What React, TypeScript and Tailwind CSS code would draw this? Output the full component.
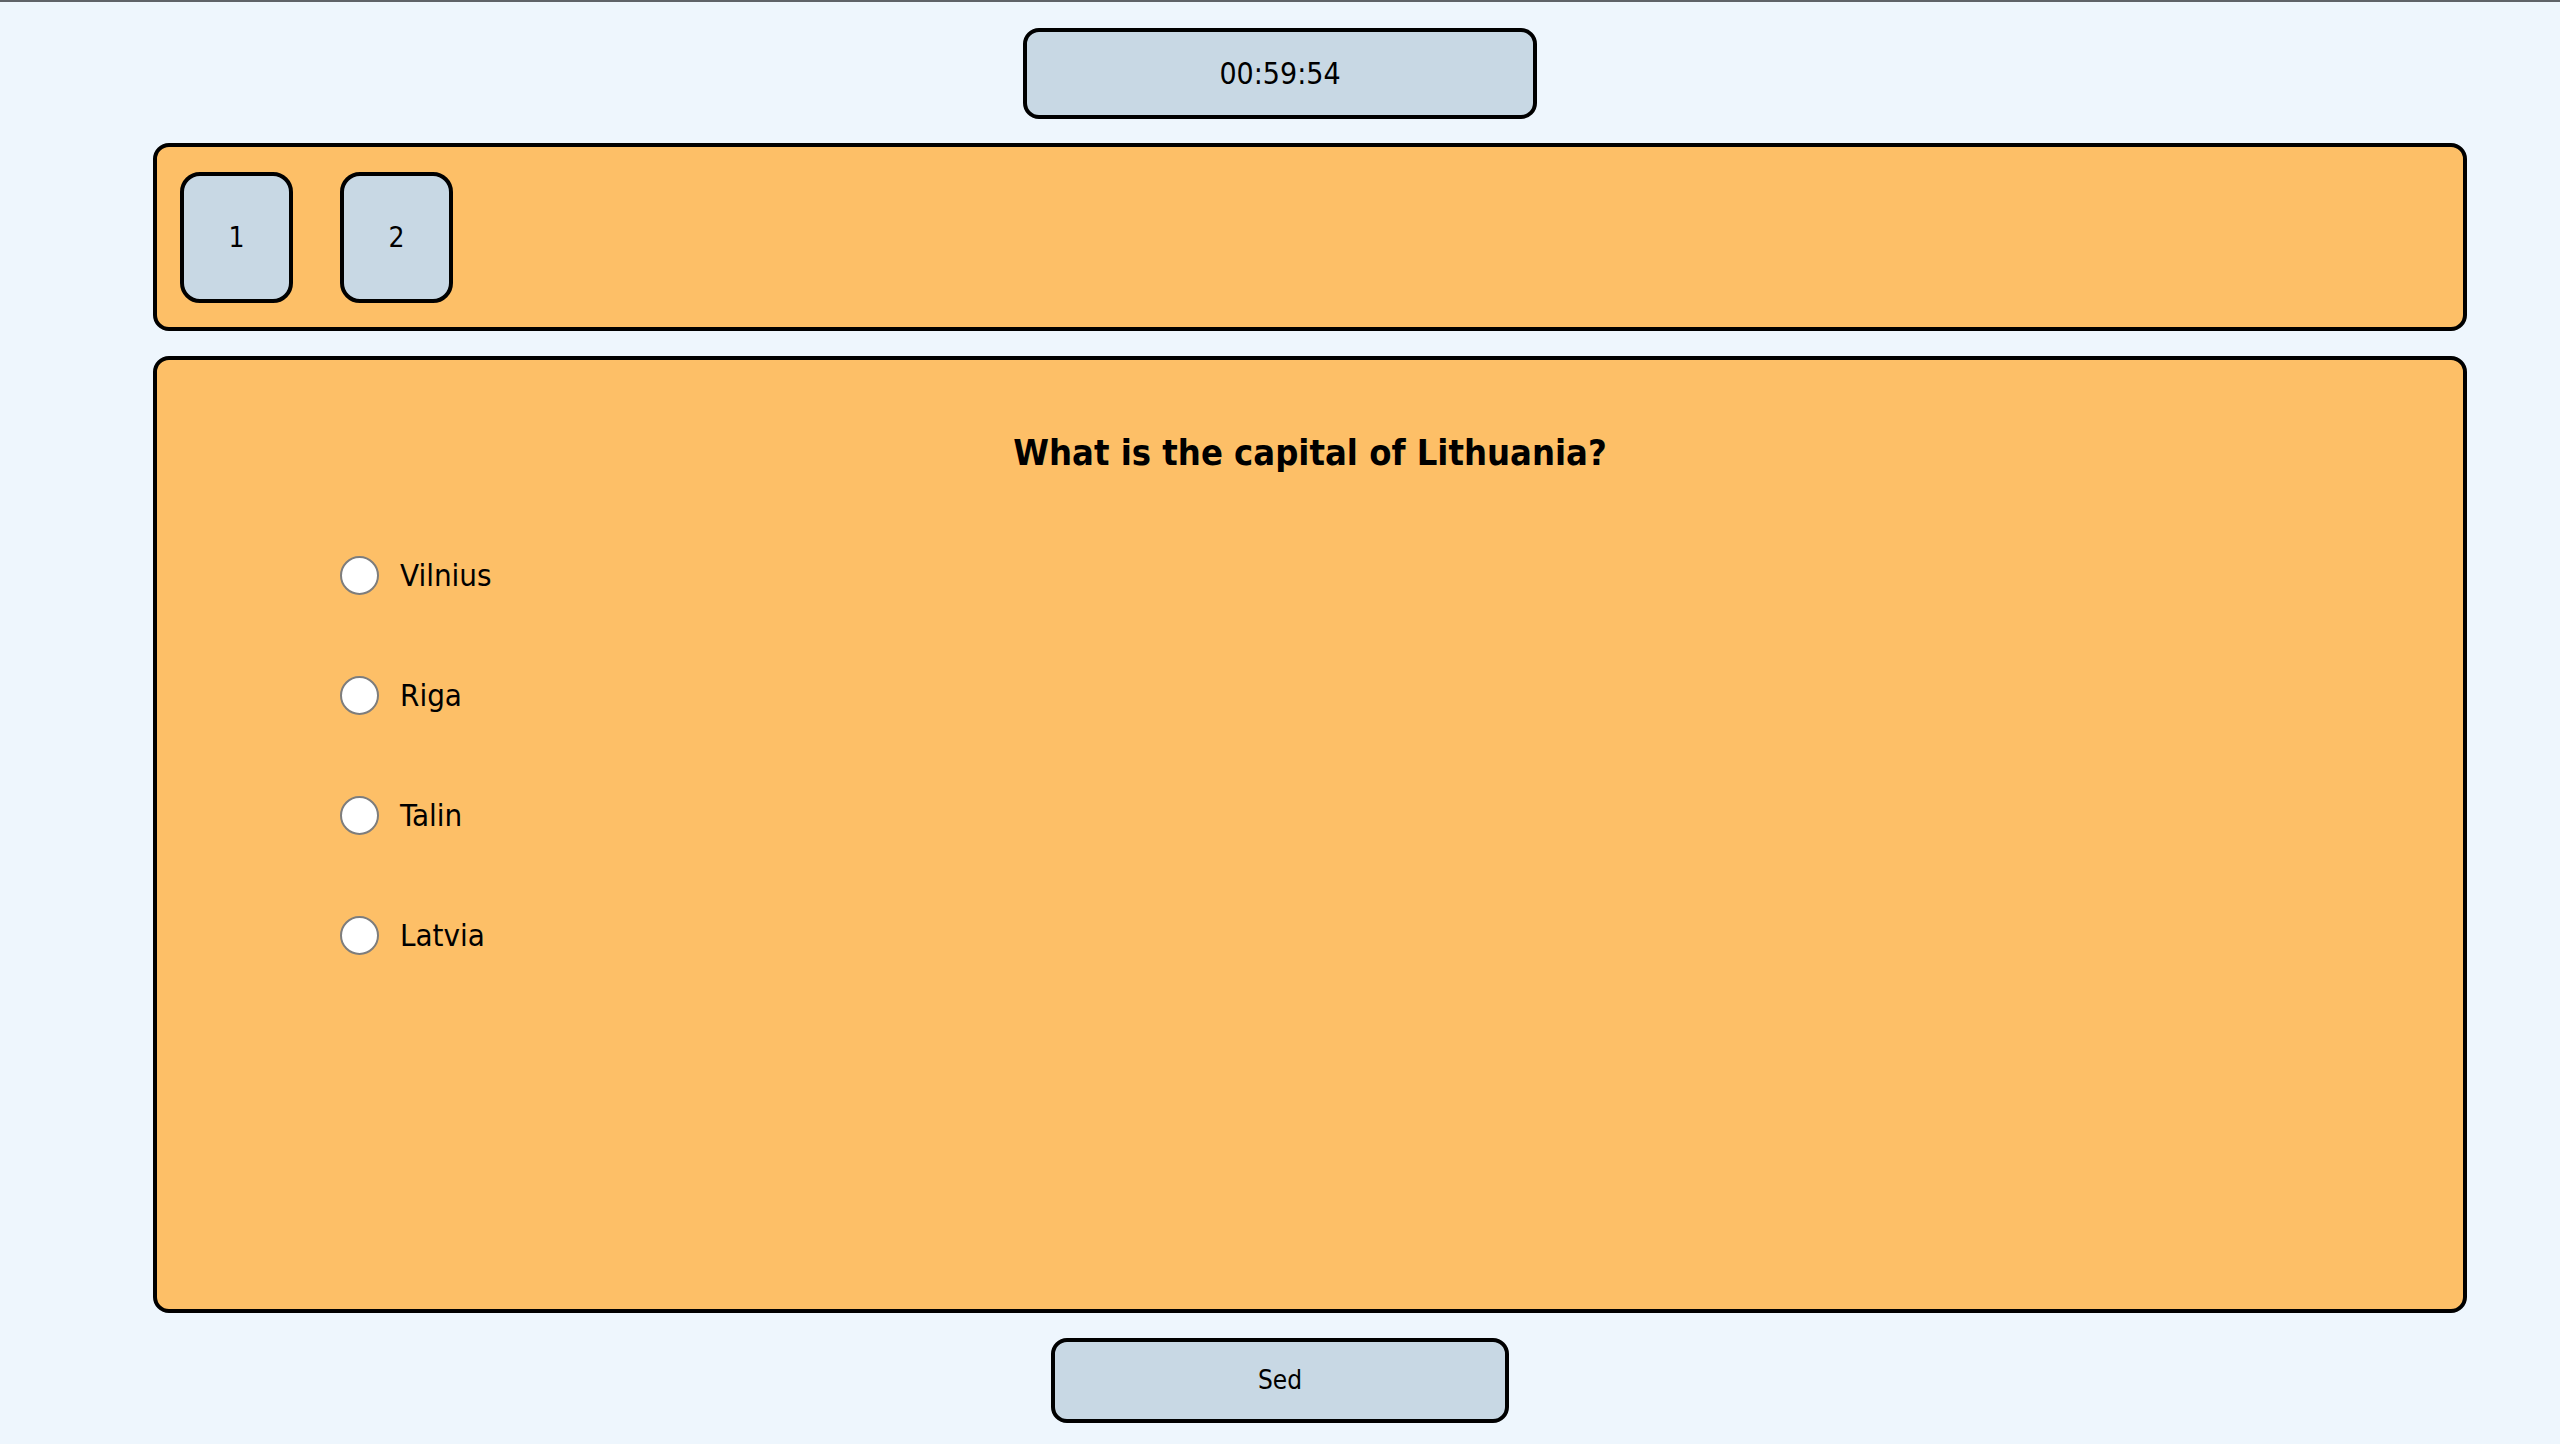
import React, { useState } from 'react';

const options = ['Vilnius', 'Riga', 'Talin', 'Latvia'];

export default function App() {
  const [answer, setAnswer] = useState<string | null>(null);

  return (
    <div className="min-h-[1444px] bg-[#eef6fd] border-t-2 border-[#5f6368] font-['DejaVu_Sans_Condensed','DejaVu_Sans',sans-serif] text-black">
      <div className="pt-[26px] flex justify-center">
        <div className="w-[514px] h-[91px] flex items-center justify-center rounded-[16px] border-4 border-black bg-[#c8d8e4] text-[30px]">
          00:59:54
        </div>
      </div>

      <div className="ml-[153px] w-[2314px] mt-[24px] h-[188px] rounded-[16px] border-4 border-black bg-[#fdbf67] flex items-center gap-[47px] pl-[23px]">
        {[1, 2].map((n) => (
          <button
            key={n}
            className="w-[113px] h-[131px] rounded-[20px] border-4 border-black bg-[#c8d8e4] text-[28px] pt-[2px] flex items-center justify-center"
          >
            {n}
          </button>
        ))}
      </div>

      <div className="ml-[153px] w-[2314px] mt-[25px] h-[957px] rounded-[16px] border-4 border-black bg-[#fdbf67]">
        <h1 className="text-center font-bold text-[36px] pt-[70px] leading-[46px]">
          What is the capital of Lithuania?
        </h1>
        <div className="pl-[183px] pt-[80px] flex flex-col gap-[81px]">
          {options.map((o) => (
            <label key={o} className="flex items-center gap-[21px] h-[39px] text-[31px] cursor-pointer">
              <span
                onClick={() => setAnswer(o)}
                className="w-[39px] h-[39px] rounded-full border-2 border-[#7d7d7d] bg-white flex items-center justify-center"
              >
                {answer === o && <span className="w-[21px] h-[21px] rounded-full bg-[#2f6fd6]" />}
              </span>
              <span onClick={() => setAnswer(o)}>{o}</span>
            </label>
          ))}
        </div>
      </div>

      <div className="flex justify-center mt-[25px]">
        <button className="w-[458px] h-[85px] rounded-[16px] border-4 border-black bg-[#c8d8e4] text-[26px]">
          Sed
        </button>
      </div>
    </div>
  );
}
